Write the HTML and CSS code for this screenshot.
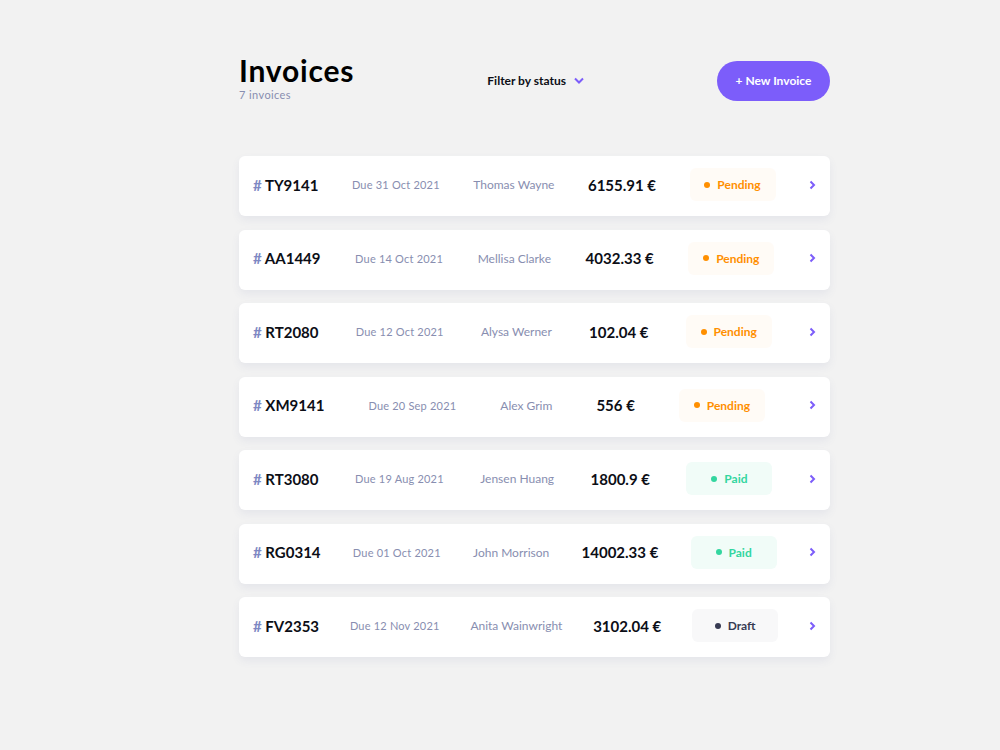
FILE: index.html
```html
<!DOCTYPE html>
<html>
<head>
<meta charset="utf-8">
<link rel="stylesheet" href="styles.css">
</head>
<body>
<main class="page">
  <header class="header">
    <div class="title-block">
      <h1 class="title">Invoices</h1>
      <p class="subtitle">7 invoices</p>
    </div>
    <button class="filter">Filter by status
      <svg class="filter-icon" width="10" height="7" viewBox="0 0 10 7"><path d="M1 1.5l4 4 4-4" fill="none" stroke="#7c5dfa" stroke-width="2"/></svg>
    </button>
    <button class="new-btn">+ New Invoice</button>
  </header>

  <ul class="list">
    <li class="card">
      <span class="id"><span class="hash">#</span> TY9141</span>
      <span class="due">Due 31 Oct 2021</span>
      <span class="name">Thomas Wayne</span>
      <span class="amount">6155.91 €</span>
      <span class="badge pending"><span class="dot"></span>Pending</span>
      <svg class="chev" width="7" height="10" viewBox="0 0 7 10"><path d="M1.5 1.5l3.5 3.5-3.5 3.5" fill="none" stroke="#7c5dfa" stroke-width="2"/></svg>
    </li>
    <li class="card">
      <span class="id"><span class="hash">#</span> AA1449</span>
      <span class="due">Due 14 Oct 2021</span>
      <span class="name">Mellisa Clarke</span>
      <span class="amount">4032.33 €</span>
      <span class="badge pending"><span class="dot"></span>Pending</span>
      <svg class="chev" width="7" height="10" viewBox="0 0 7 10"><path d="M1.5 1.5l3.5 3.5-3.5 3.5" fill="none" stroke="#7c5dfa" stroke-width="2"/></svg>
    </li>
    <li class="card">
      <span class="id"><span class="hash">#</span> RT2080</span>
      <span class="due">Due 12 Oct 2021</span>
      <span class="name">Alysa Werner</span>
      <span class="amount">102.04 €</span>
      <span class="badge pending"><span class="dot"></span>Pending</span>
      <svg class="chev" width="7" height="10" viewBox="0 0 7 10"><path d="M1.5 1.5l3.5 3.5-3.5 3.5" fill="none" stroke="#7c5dfa" stroke-width="2"/></svg>
    </li>
    <li class="card">
      <span class="id"><span class="hash">#</span> XM9141</span>
      <span class="due">Due 20 Sep 2021</span>
      <span class="name">Alex Grim</span>
      <span class="amount">556 €</span>
      <span class="badge pending"><span class="dot"></span>Pending</span>
      <svg class="chev" width="7" height="10" viewBox="0 0 7 10"><path d="M1.5 1.5l3.5 3.5-3.5 3.5" fill="none" stroke="#7c5dfa" stroke-width="2"/></svg>
    </li>
    <li class="card">
      <span class="id"><span class="hash">#</span> RT3080</span>
      <span class="due">Due 19 Aug 2021</span>
      <span class="name">Jensen Huang</span>
      <span class="amount">1800.9 €</span>
      <span class="badge paid"><span class="dot"></span>Paid</span>
      <svg class="chev" width="7" height="10" viewBox="0 0 7 10"><path d="M1.5 1.5l3.5 3.5-3.5 3.5" fill="none" stroke="#7c5dfa" stroke-width="2"/></svg>
    </li>
    <li class="card">
      <span class="id"><span class="hash">#</span> RG0314</span>
      <span class="due">Due 01 Oct 2021</span>
      <span class="name">John Morrison</span>
      <span class="amount">14002.33 €</span>
      <span class="badge paid"><span class="dot"></span>Paid</span>
      <svg class="chev" width="7" height="10" viewBox="0 0 7 10"><path d="M1.5 1.5l3.5 3.5-3.5 3.5" fill="none" stroke="#7c5dfa" stroke-width="2"/></svg>
    </li>
    <li class="card">
      <span class="id"><span class="hash">#</span> FV2353</span>
      <span class="due">Due 12 Nov 2021</span>
      <span class="name">Anita Wainwright</span>
      <span class="amount">3102.04 €</span>
      <span class="badge draft"><span class="dot"></span>Draft</span>
      <svg class="chev" width="7" height="10" viewBox="0 0 7 10"><path d="M1.5 1.5l3.5 3.5-3.5 3.5" fill="none" stroke="#7c5dfa" stroke-width="2"/></svg>
    </li>
  </ul>
</main>
</body>
</html>
```

FILE: styles.css
```css
* { box-sizing: border-box; }
html, body { margin: 0; padding: 0; }
body {
  background: #f2f2f2;
  font-family: "Lato", "Liberation Sans", sans-serif;
  color: #0c0e16;
  width: 1000px;
  height: 750px;
  overflow: hidden;
}
.page {
  width: 591px;
  margin-left: 239px;
  padding-top: 60px;
}
.header {
  display: flex;
  justify-content: space-between;
  align-items: center;
  height: 41px;
}
.title-block {
  display: flex;
  flex-direction: column;
  margin-top: -7px;
}
.title {
  margin: 0;
  font-size: 30px;
  font-weight: 700;
  line-height: 36px;
  letter-spacing: 0.8px;
  color: #000;
}
.subtitle {
  margin: 0;
  font-size: 11px;
  color: #888eb0;
  line-height: 13.2px;
  letter-spacing: 0.4px;
}
.filter {
  border: 0;
  background: none;
  font-family: inherit;
  font-weight: 700;
  font-size: 12px;
  color: #0c0e16;
  display: flex;
  align-items: center;
  gap: 8px;
  padding: 0;
}
.new-btn {
  border: 0;
  width: 113px;
  height: 40px;
  border-radius: 20px;
  background: #7c5dfa;
  color: #fff;
  font-family: inherit;
  font-weight: 700;
  font-size: 12px;
  padding: 0;
}
.list {
  list-style: none;
  margin: 55px 0 0;
  padding: 0;
  display: flex;
  flex-direction: column;
  gap: 13.5px;
}
.card {
  height: 60px;
  background: #fff;
  border-radius: 6px;
  box-shadow: 0 4px 8px rgba(72, 84, 159, 0.08);
  display: flex;
  align-items: center;
  justify-content: space-between;
  padding: 0 14px 3px;
}
.id { font-weight: 700; font-size: 15px; color: #0c0e16; }
.hash { color: #7e88c3; }
.due { font-size: 11px; color: #888eb0; letter-spacing: 0.2px; }
.name { font-size: 12px; color: #888eb0; }
.amount { font-weight: 700; font-size: 15px; color: #0c0e16; }
.badge {
  width: 86px;
  height: 33px;
  border-radius: 6px;
  display: flex;
  align-items: center;
  justify-content: center;
  gap: 7px;
  font-weight: 700;
  font-size: 12px;
}
.dot { width: 6px; height: 6px; border-radius: 50%; background: currentColor; }
.pending { color: #ff8f00; background: rgba(255, 143, 0, 0.035); }
.paid { color: #33d69f; background: rgba(51, 214, 159, 0.07); }
.draft { color: #373b53; background: rgba(55, 59, 83, 0.035); }
.chev { display: block; }
```
